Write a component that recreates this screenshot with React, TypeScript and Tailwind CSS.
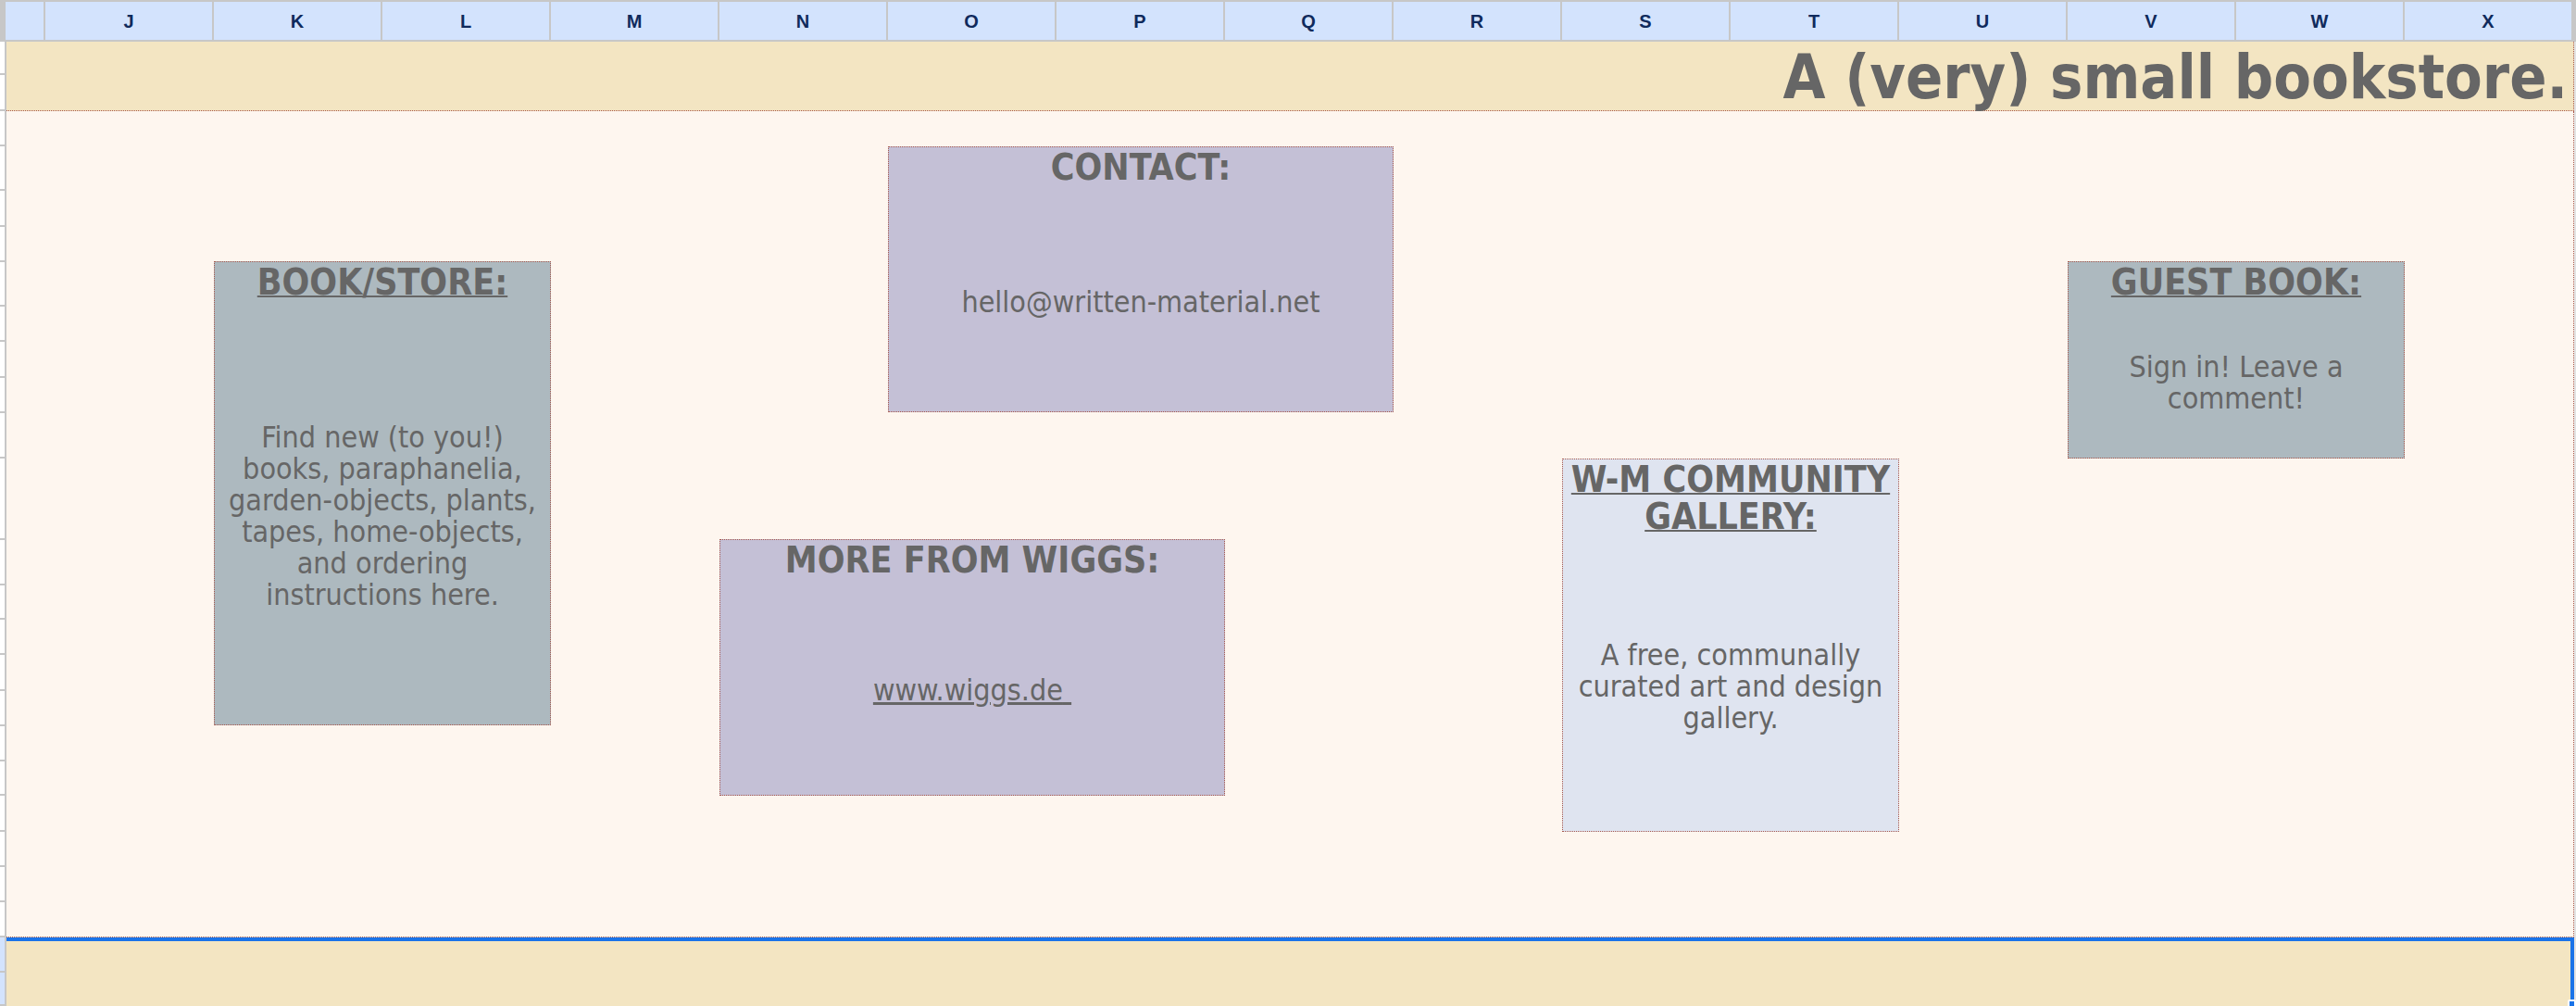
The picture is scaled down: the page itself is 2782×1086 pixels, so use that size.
const COLUMNS = ["J", "K", "L", "M", "N", "O", "P", "Q", "R", "S", "T", "U", "V", "W", "X"];

// row boundaries (page y) shown as ticks in the narrow row-number gutter
const ROW_LINES = [45, 81, 120, 158, 206, 245, 283, 331, 369, 408, 446, 495, 583, 632, 669, 707, 746, 784, 822, 859, 898, 936, 974, 1012];
const SELECTED_ROWS = [38, 36];

function ColumnHeader() {
    return (
        <div className="flex h-[45px] shrink-0 border-y-2 border-[#c7c7c7] bg-[#d3e3fd]">
            <div className="w-[6px] bg-[#c7c7c7]" />
            <div className="w-[43px] border-r-2 border-[#c7c7c7]" />
            {COLUMNS.map((col) => (
                <div
                    key={col}
                    className="flex w-[182px] items-center justify-center border-r-2 border-[#c7c7c7] font-['Liberation_Sans',Arial,sans-serif] text-[20px] font-bold text-[#0f2a5c]"
                >
                    {col}
                </div>
            ))}
            <div className="flex-1 bg-[#c7c7c7]" />
        </div>
    );
}

function RowGutter() {
    const heights = ROW_LINES.slice(1).map((y, i) => y - ROW_LINES[i]);
    return (
        <div className="flex w-[7px] shrink-0 flex-col border-r-2 border-[#c7c7c7]">
            {heights.map((h, i) => (
                <div key={i} className="shrink-0 border-b-2 border-[#c7c7c7] bg-white" style={{ height: h }} />
            ))}
            {SELECTED_ROWS.map((h, i) => (
                <div key={`s${i}`} className="shrink-0 border-b-2 border-[#c7c7c7] bg-[#d3e3fd]" style={{ height: h }} />
            ))}
        </div>
    );
}

interface CardProps {
    title: React.ReactNode;
    underline?: boolean;
    className: string;
    children: React.ReactNode;
}

function Card({ title, underline, className, children }: CardProps) {
    return (
        <div className={`flex flex-col border border-dotted border-[#a8574b] text-[#666666] ${className}`}>
            <div className="pt-[2px] pb-[7px] text-center text-[39px] leading-[40px] font-bold">
                <span className={underline ? "underline decoration-2" : ""}>{title}</span>
            </div>
            <div className="flex flex-1 items-center justify-center px-1 text-center text-[32px] leading-[34px]">
                <div>{children}</div>
            </div>
        </div>
    );
}

export default function App() {
    return (
        <div className="flex h-[1086px] w-[2782px] flex-col overflow-hidden bg-white [font-family:'DejaVu_Sans_Condensed','DejaVu_Sans',sans-serif] font-stretch-condensed">
            <ColumnHeader />

            <div className="flex min-h-0 flex-1">
                <RowGutter />

                <div className="flex w-[2773px] shrink-0 flex-col">
                    {/* title row */}
                    <div className="flex h-[75px] shrink-0 items-end justify-end border-r border-b border-dotted border-[#a8574b] bg-[#f3e5c2] pr-[6px]">
                        <h1 className="text-[66px] leading-[70px] font-bold text-[#666666]">A (very) small bookstore.</h1>
                    </div>

                    {/* sheet body */}
                    <div className="grid h-[892px] shrink-0 grid-cols-[42px_repeat(15,182px)] grid-rows-[38px_124px_163px_50px_87px_201px_76px_39px_113px] border-r border-b border-dotted border-[#a8574b] bg-[#fef6ef]">
                        <Card title="BOOK/STORE:" underline className="col-start-3 col-end-5 row-start-3 row-end-7 bg-[#adb9bf]">
                            Find new (to you!)
                            <br />
                            books, paraphanelia,
                            <br />
                            garden-objects, plants,
                            <br />
                            tapes, home-objects,
                            <br />
                            and ordering
                            <br />
                            instructions here.
                        </Card>

                        <Card title="CONTACT:" className="col-start-7 col-end-10 row-start-2 row-end-4 bg-[#c4c0d6]">
                            hello@written-material.net
                        </Card>

                        <Card title="MORE FROM WIGGS:" className="col-start-6 col-end-9 row-start-6 row-end-8 bg-[#c4c0d6]">
                            <span className="underline">www.wiggs.de{"\u00a0"}</span>
                        </Card>

                        <Card
                            title={
                                <>
                                    W-M COMMUNITY
                                    <br />
                                    GALLERY:
                                </>
                            }
                            underline
                            className="col-start-11 col-end-13 row-start-5 row-end-9 bg-[#dfe4f0]"
                        >
                            A free, communally
                            <br />
                            curated art and design
                            <br />
                            gallery.
                        </Card>

                        <Card title="GUEST BOOK:" underline className="col-start-14 col-end-16 row-start-3 row-end-5 bg-[#adb9bf]">
                            Sign in! Leave a
                            <br />
                            comment!
                        </Card>
                    </div>

                    {/* selected empty row */}
                    <div className="relative h-[74px] shrink-0 border-t-4 border-r-4 border-[#1a73e8] bg-[#f3e5c2]">
                        <div className="absolute right-[-6px] bottom-[-2px] h-[9px] w-[9px] rounded-[2px] border-2 border-white bg-[#1a73e8]" />
                    </div>
                </div>

                <div className="flex-1 bg-[#e3e3e3]" />
            </div>
        </div>
    );
}
